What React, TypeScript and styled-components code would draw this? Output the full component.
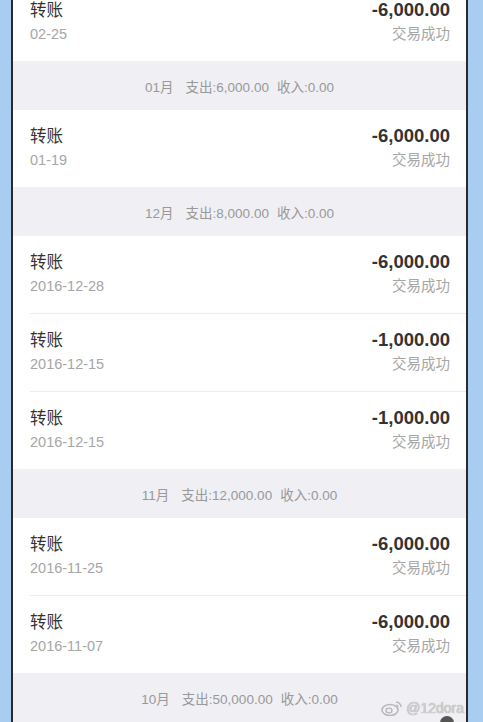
import styled, { createGlobalStyle } from "styled-components";

const GlobalStyle = createGlobalStyle`
  html, body {
    margin: 0;
    padding: 0;
    background: #a9cdf1;
  }
  body {
    font-family: "Liberation Sans", "Noto Sans CJK SC", sans-serif;
    -webkit-font-smoothing: antialiased;
  }
`

interface Record {
  date: string;
  amount: string;
}

interface Group {
  month: string;
  out: string;
  income: string;
  records: Record[];
}

const groups: Group[] = [
  { month: "01月", out: "6,000.00", income: "0.00", records: [{ date: "01-19", amount: "-6,000.00" }] },
  {
    month: "12月", out: "8,000.00", income: "0.00", records: [
      { date: "2016-12-28", amount: "-6,000.00" },
      { date: "2016-12-15", amount: "-1,000.00" },
      { date: "2016-12-15", amount: "-1,000.00" },
    ]
  },
  {
    month: "11月", out: "12,000.00", income: "0.00", records: [
      { date: "2016-11-25", amount: "-6,000.00" },
      { date: "2016-11-07", amount: "-6,000.00" },
    ]
  },
  { month: "10月", out: "50,000.00", income: "0.00", records: [] },
]

const Row = ({ date, amount, first }: Record & { first?: boolean }) => (
  <Item>
    <ItemInner $first={first}>
      <Side>
        <Title>转账</Title>
        <Sub>{date}</Sub>
      </Side>
      <Side $right>
        <Amount>{amount}</Amount>
        <Sub>交易成功</Sub>
      </Side>
    </ItemInner>
  </Item>
)

export default function App() {
  return (
    <>
      <GlobalStyle />
      <Frame>
        <Screen>
          <List>
            <Row date="02-25" amount="-6,000.00" />
            {groups.map((g) => (
              <div key={g.month}>
                <MonthHeader>
                  <span>{g.month}</span>
                  <Stat>支出:{g.out}</Stat>
                  <Stat $small>收入:{g.income}</Stat>
                </MonthHeader>
                {g.records.map((r, i) => (
                  <Row key={i} {...r} first={i === 0} />
                ))}
              </div>
            ))}
          </List>
          <Watermark>
            <svg width="22" height="16" viewBox="0 0 22 16">
              <ellipse cx="9" cy="10" rx="8" ry="5.5" fill="none" stroke="#b8b8b8" strokeWidth="1.6" />
              <ellipse cx="8" cy="10.5" rx="3" ry="2.3" fill="none" stroke="#b8b8b8" strokeWidth="1.3" />
              <path d="M15 2 a5 5 0 0 1 5 5" fill="none" stroke="#b8b8b8" strokeWidth="1.4" />
              <path d="M15 5 a2 2 0 0 1 2 2" fill="none" stroke="#b8b8b8" strokeWidth="1.2" />
            </svg>
            @12dora
          </Watermark>
          <Badge />
        </Screen>
      </Frame>
    </>
  )
}

const Frame = styled.div`
  height: 722px;
  overflow: hidden;
  padding: 0 15px 0 11px;
`

const Screen = styled.div`
  position: relative;
  height: 100%;
  background: #efeff4;
  border-left: 2px solid #2a2a2a;
  border-right: 2px solid #2a2a2a;
  overflow: hidden;
`

const List = styled.div`
  margin-top: -17px;
`

const Item = styled.div`
  background: #fff;
  padding-left: 17px;
`

const ItemInner = styled.div<{ $first?: boolean }>`
  display: flex;
  justify-content: space-between;
  padding: 15px 16px 15px 0;
  border-top: ${p => p.$first ? "none" : "1px solid #ececec"};
  height: 47px;
`

const Side = styled.div<{ $right?: boolean }>`
  display: flex;
  flex-direction: column;
  align-items: ${p => p.$right ? "flex-end" : "flex-start"};
`

const Title = styled.div`
  font-size: 16.5px;
  line-height: 22px;
  color: #333;
`

const Amount = styled.div`
  font-size: 18.5px;
  line-height: 22px;
  font-weight: bold;
  color: #333;
`

const Sub = styled.div`
  margin-top: 2px;
  font-size: 14.5px;
  line-height: 22px;
  color: #a6a6a6;
`

const MonthHeader = styled.div`
  height: 49px;
  display: flex;
  align-items: center;
  justify-content: center;
  font-size: 13.5px;
  color: #999;
  background: #efeff4;
`

const Stat = styled.span<{ $small?: boolean }>`
  margin-left: ${p => p.$small ? "8px" : "12px"};
`

const Watermark = styled.div`
  position: absolute;
  right: 2px;
  bottom: 6px;
  display: flex;
  align-items: center;
  gap: 3px;
  font-size: 14px;
  color: #d0d0d0;
  text-shadow: 0 0 1px #999;
`

const Badge = styled.div`
  position: absolute;
  right: 12px;
  bottom: -8px;
  width: 14px;
  height: 14px;
  border-radius: 50%;
  background: #555;
`
